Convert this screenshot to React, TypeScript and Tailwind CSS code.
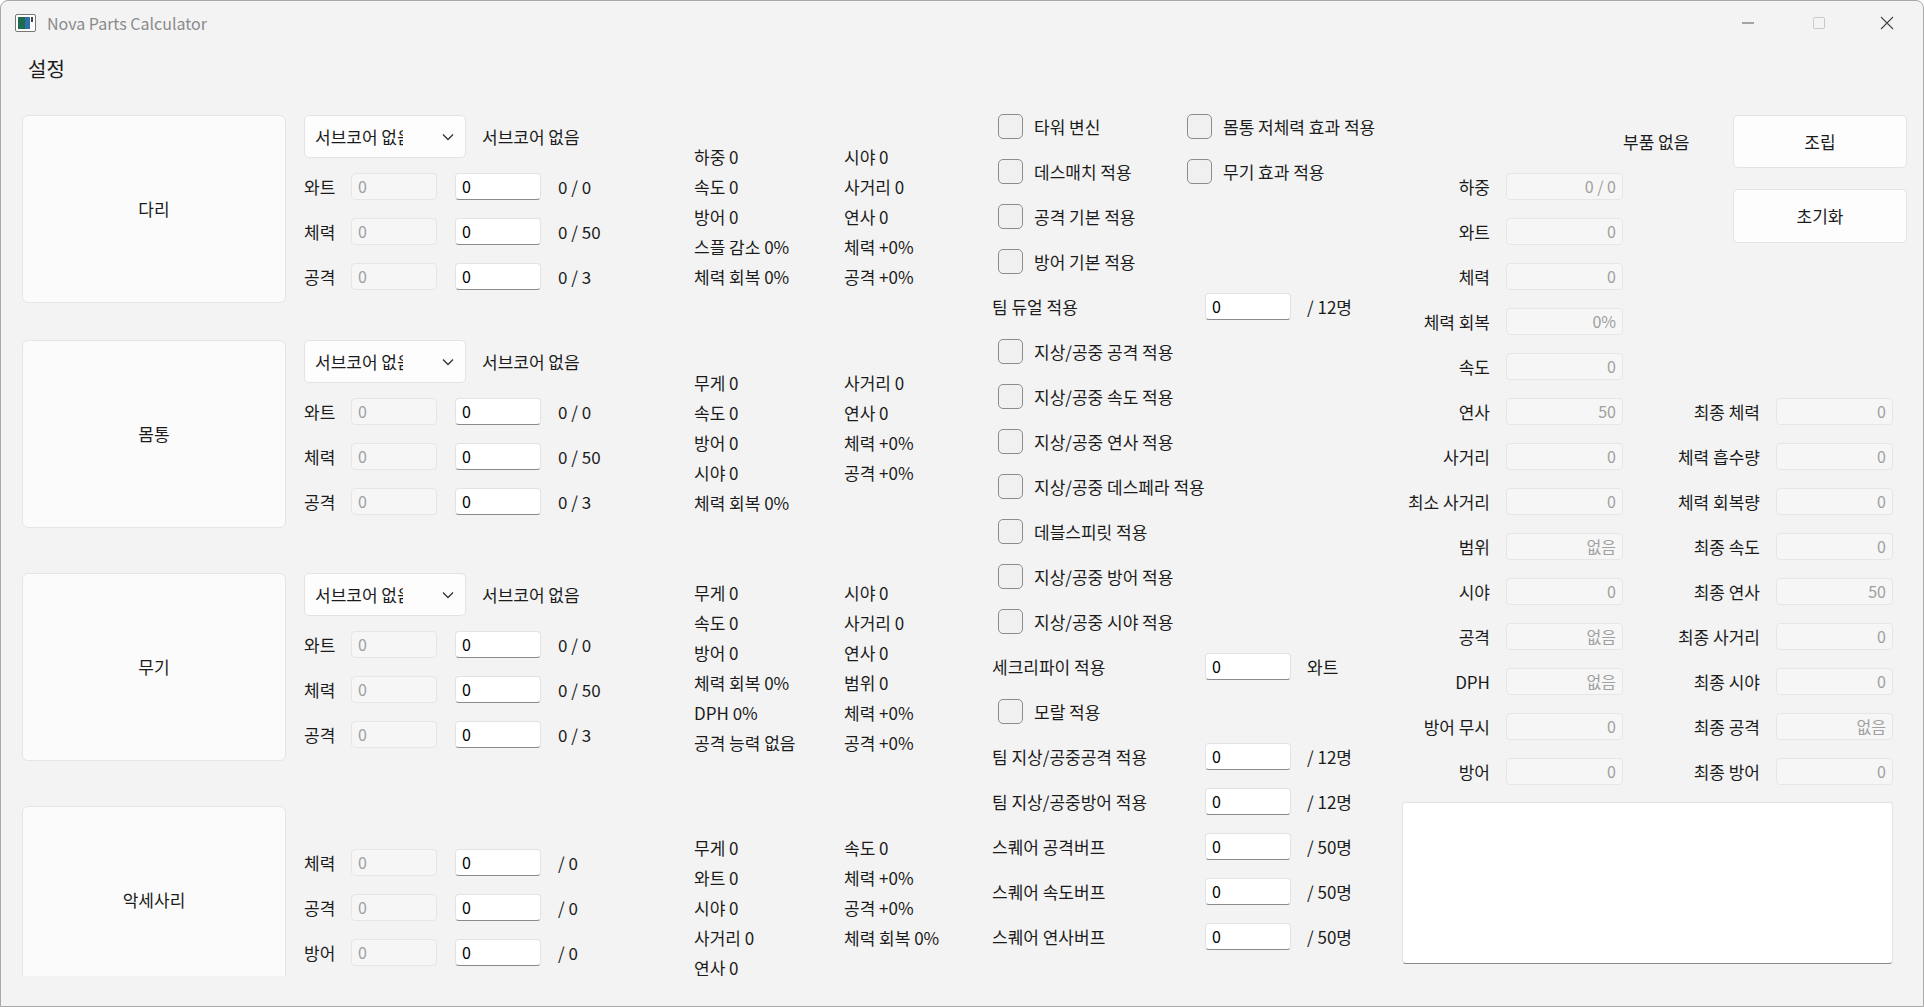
import React from "react";

const F = { fontFamily: '"Noto Sans CJK KR","Noto Sans",sans-serif' };

function DisIn({ v = "0", w = "w-[86px]", right = false }: { v?: string; w?: string; right?: boolean }) {
  return (
    <div className={`${w} h-[27px] rounded-[4px] border border-[#e6e6e6] bg-[#f6f6f6] text-[#a0a0a0] text-[16px] leading-[25px] px-[6px] ${right ? "text-right" : ""}`}>{v}</div>
  );
}
function EdIn({ v = "0", w = "w-[86px]" }: { v?: string; w?: string }) {
  return (
    <div className={`${w} h-[27px] rounded-[4px] border border-[#e3e3e3] border-b-[#8a8a8a] bg-white text-black text-[16px] leading-[25px] px-[6px]`}>{v}</div>
  );
}
function CB() {
  return <div className="w-[25px] h-[25px] rounded-[5px] border border-[#8c8c8c] bg-[#f0f0f0] shrink-0" />;
}

type Part = { name: string; dd: boolean; rows: [string, string][]; stats: [string, string][]; pt: string; mb: string; rowsTop: string };

const parts: Part[] = [
  { name: "다리", dd: true, rows: [["와트", "0 / 0"], ["체력", "0 / 50"], ["공격", "0 / 3"]], stats: [["하중 0", "시야 0"], ["속도 0", "사거리 0"], ["방어 0", "연사 0"], ["스플 감소 0%", "체력 +0%"], ["체력 회복 0%", "공격 +0%"]], pt: "pt-[27px]", mb: "mb-[37px]", rowsTop: "mt-[6px]" },
  { name: "몸통", dd: true, rows: [["와트", "0 / 0"], ["체력", "0 / 50"], ["공격", "0 / 3"]], stats: [["무게 0", "사거리 0"], ["속도 0", "연사 0"], ["방어 0", "체력 +0%"], ["시야 0", "공격 +0%"], ["체력 회복 0%", ""]], pt: "pt-[28px]", mb: "mb-[45px]", rowsTop: "mt-[6px]" },
  { name: "무기", dd: true, rows: [["와트", "0 / 0"], ["체력", "0 / 50"], ["공격", "0 / 3"]], stats: [["무게 0", "시야 0"], ["속도 0", "사거리 0"], ["방어 0", "연사 0"], ["체력 회복 0%", "범위 0"], ["DPH 0%", "체력 +0%"], ["공격 능력 없음", "공격 +0%"]], pt: "pt-[5px]", mb: "mb-[45px]", rowsTop: "mt-[6px]" },
  { name: "악세사리", dd: false, rows: [["체력", "/ 0"], ["공격", "/ 0"], ["방어", "/ 0"]], stats: [["무게 0", "속도 0"], ["와트 0", "체력 +0%"], ["시야 0", "공격 +0%"], ["사거리 0", "체력 회복 0%"], ["연사 0", ""]], pt: "pt-[27px]", mb: "", rowsTop: "mt-[34px]" },
];

function PartRow({ p }: { p: Part }) {
  return (
    <div className={`flex h-[188px] ${p.mb}`}>
      <div className="w-[264px] h-[188px] shrink-0 rounded-[6px] border border-[#e5e5e5] bg-[#fbfbfb] flex items-center justify-center text-[17px]">{p.name}</div>
      <div className="w-[390px] ml-[18px] shrink-0 flex flex-col">
        {p.dd && (
          <div className="flex items-center h-[43px]">
            <div className="w-[162px] h-[43px] rounded-[5px] border border-[#e3e3e3] bg-[#fdfdfd] flex items-center pl-[10px] pr-[10px]">
              <span className="w-[88px] overflow-hidden whitespace-nowrap text-[17px]">서브코어 없음</span>
              <svg className="ml-auto" width="14" height="14" viewBox="0 0 14 14"><path d="M2 4.5 L7 9.5 L12 4.5" fill="none" stroke="#333" strokeWidth="1.3" /></svg>
            </div>
            <span className="ml-[16px] text-[17px]">서브코어 없음</span>
          </div>
        )}
        <div className={p.rowsTop}>
          {p.rows.map(([l, r], i) => (
            <div key={i} className="flex items-center h-[45px] text-[17px]">
              <span className="w-[47px]">{l}</span>
              <DisIn />
              <div className="ml-[18px]"><EdIn /></div>
              <span className="ml-[17px]">{r}</span>
            </div>
          ))}
        </div>
      </div>
      <div className={`${p.pt} flex flex-col text-[17px]`}>
        {p.stats.map(([a, b], i) => (
          <div key={i} className="flex h-[30px] items-center whitespace-nowrap">
            <span className="w-[150px]">{a}</span>
            <span>{b}</span>
          </div>
        ))}
      </div>
    </div>
  );
}

type Mid = { cb?: boolean; t: string; input?: string; cb2?: string };
const mids: Mid[] = [
  { cb: true, t: "타워 변신", cb2: "몸통 저체력 효과 적용" },
  { cb: true, t: "데스매치 적용", cb2: "무기 효과 적용" },
  { cb: true, t: "공격 기본 적용" },
  { cb: true, t: "방어 기본 적용" },
  { t: "팀 듀얼 적용", input: "/ 12명" },
  { cb: true, t: "지상/공중 공격 적용" },
  { cb: true, t: "지상/공중 속도 적용" },
  { cb: true, t: "지상/공중 연사 적용" },
  { cb: true, t: "지상/공중 데스페라 적용" },
  { cb: true, t: "데블스피릿 적용" },
  { cb: true, t: "지상/공중 방어 적용" },
  { cb: true, t: "지상/공중 시야 적용" },
  { t: "세크리파이 적용", input: "와트" },
  { cb: true, t: "모랄 적용" },
  { t: "팀 지상/공중공격 적용", input: "/ 12명" },
  { t: "팀 지상/공중방어 적용", input: "/ 12명" },
  { t: "스퀘어 공격버프", input: "/ 50명" },
  { t: "스퀘어 속도버프", input: "/ 50명" },
  { t: "스퀘어 연사버프", input: "/ 50명" },
];

function StatRow({ l, v, lw }: { l: string; v: string; lw: string }) {
  return (
    <div className="flex items-center h-[45px] text-[17px]">
      <span className={`${lw} text-right whitespace-nowrap`}>{l}</span>
      <div className="ml-[16px]"><DisIn v={v} w="w-[117px]" right /></div>
    </div>
  );
}

const rs1: [string, string][] = [["하중", "0 / 0"], ["와트", "0"], ["체력", "0"], ["체력 회복", "0%"], ["속도", "0"], ["연사", "50"], ["사거리", "0"], ["최소 사거리", "0"], ["범위", "없음"], ["시야", "0"], ["공격", "없음"], ["DPH", "없음"], ["방어 무시", "0"], ["방어", "0"]];
const rs2: [string, string][] = [["최종 체력", "0"], ["체력 흡수량", "0"], ["체력 회복량", "0"], ["최종 속도", "0"], ["최종 연사", "50"], ["최종 사거리", "0"], ["최종 시야", "0"], ["최종 공격", "없음"], ["최종 방어", "0"]];

export default function App() {
  return (
    <div style={F} className="w-[1924px] h-[1007px] bg-[#f3f3f3] border border-[#a8a8a8] rounded-t-[8px] overflow-hidden text-[#1b1b1b] flex flex-col">
      <div className="h-[44px] shrink-0 flex items-center">
        <svg className="ml-[14px]" width="21" height="18" viewBox="0 0 21 18">
          <rect x="0.5" y="0.5" width="20" height="17" rx="1.5" fill="#fff" stroke="#777" />
          <rect x="3" y="3" width="7" height="12" fill="#1d6b4a" />
          <rect x="10" y="3" width="5" height="12" fill="#2f6fae" />
          <rect x="16" y="3" width="2" height="5" fill="#444" />
        </svg>
        <span className="ml-[11px] text-[16px] text-[#8a8a8a]">Nova Parts Calculator</span>
        <div className="ml-auto flex items-center">
          <svg width="70" height="44" viewBox="0 0 70 44"><path d="M29 22 H41" stroke="#555" strokeWidth="1" /></svg>
          <svg width="70" height="44" viewBox="0 0 70 44"><rect x="30.5" y="16.5" width="11" height="11" rx="1" fill="none" stroke="#c8c8c8" /></svg>
          <svg width="70" height="44" viewBox="0 0 70 44"><path d="M28 16 L40 28 M40 16 L28 28" stroke="#444" strokeWidth="1.1" /></svg>
        </div>
      </div>
      <div className="h-[56px] shrink-0 pl-[27px] pt-[9px] text-[20px]">설정</div>
      <div className="flex h-[875px] overflow-hidden">
        <div className="w-[991px] shrink-0 pl-[21px] pt-[14px]">
          {parts.map((p) => <PartRow key={p.name} p={p} />)}
        </div>
        <div className="w-[408px] shrink-0 pt-[3px] text-[17px]">
          {mids.map((m, i) => (
            <div key={i} className="flex items-center h-[45px] whitespace-nowrap">
              {m.cb ? (
                <div className="flex items-center w-[195px] pl-[6px]">
                  <CB />
                  <span className="ml-[11px]">{m.t}</span>
                </div>
              ) : (
                <span className="w-[213px]">{m.t}</span>
              )}
              {m.cb2 && (
                <div className="flex items-center">
                  <CB /><span className="ml-[11px]">{m.cb2}</span>
                </div>
              )}
              {m.input && (
                <>
                  <EdIn />
                  <span className="ml-[16px]">{m.input}</span>
                </>
              )}
            </div>
          ))}
        </div>
        <div className="w-[505px] shrink-0 ml-[2px] flex flex-col">
          <div className="flex">
            <div className="w-[221px] pt-[63px]">
              {rs1.map(([l, v]) => <StatRow key={l} l={l} v={v} lw="w-[88px]" />)}
            </div>
            <div className="w-[284px] flex flex-col">
              <div className="h-[288px] flex flex-col">
                <div className="flex items-center mt-[14px]">
                  <span className="text-[17px] whitespace-nowrap">부품 없음</span>
                  <div className="ml-auto w-[174px] h-[53px] rounded-[5px] border border-[#e3e3e3] bg-[#fdfdfd] flex items-center justify-center text-[17px]">조립</div>
                </div>
                <div className="ml-auto mt-[21px] w-[174px] h-[54px] rounded-[5px] border border-[#e3e3e3] bg-[#fdfdfd] flex items-center justify-center text-[17px]">초기화</div>
              </div>
              {rs2.map(([l, v]) => <StatRow key={l} l={l} v={v} lw="w-[137px]" />)}
            </div>
          </div>
          <div className="mt-[8px] w-[491px] h-[162px] bg-white border border-[#e3e3e3] border-b-[#8a8a8a] rounded-[4px]" />
        </div>
      </div>
    </div>
  );
}
